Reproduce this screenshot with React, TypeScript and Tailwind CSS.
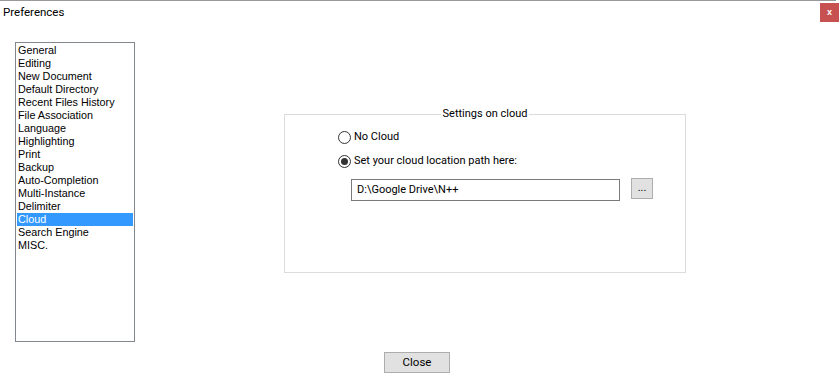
import { useState } from 'react';

const pages = [
  'General',
  'Editing',
  'New Document',
  'Default Directory',
  'Recent Files History',
  'File Association',
  'Language',
  'Highlighting',
  'Print',
  'Backup',
  'Auto-Completion',
  'Multi-Instance',
  'Delimiter',
  'Cloud',
  'Search Engine',
  'MISC.',
];

function Radio({ checked, label, onClick }: { checked: boolean; label: string; onClick: () => void }) {
  return (
    <div className="flex items-center h-[16px] cursor-default" onClick={onClick}>
      <span className="w-[13px] h-[13px] rounded-full border border-[#333] bg-white flex items-center justify-center">
        {checked && <span className="w-[7px] h-[7px] rounded-full bg-[#333]" />}
      </span>
      <span className="ml-[3px]">{label}</span>
    </div>
  );
}

export default function App() {
  const [selected, setSelected] = useState('Cloud');
  const [useCloud, setUseCloud] = useState(true);

  return (
    <div className="w-[840px] h-[384px] bg-white text-black flex flex-col overflow-hidden font-['Roboto','Liberation_Sans',sans-serif] text-[11px]">
      {/* Top edge */}
      <div className="h-[1px] w-[836px] bg-[#999]" />

      {/* Title bar */}
      <div className="h-[21px] flex justify-between items-start">
        <span className="ml-[3px] mt-[4px] leading-[14px] text-[11.5px]">Preferences</span>
        <button className="mt-[2px] mr-[1px] w-[19px] h-[19px] bg-[#c75050] text-white text-[9px] font-bold leading-none flex items-center justify-center font-['Liberation_Sans',sans-serif]">
          x
        </button>
      </div>

      {/* Body */}
      <div className="flex pt-[20px] pl-[15px]">
        {/* Page list */}
        <ul className="w-[120px] h-[300px] border border-[#828790] p-[1px] font-['Liberation_Sans',sans-serif] text-[10.8px]">
          {pages.map(p => (
            <li
              key={p}
              onClick={() => setSelected(p)}
              className={
                p === selected
                  ? 'h-[13px] leading-[13px] pl-[1px] bg-[#3399ff] text-white cursor-default'
                  : 'h-[13px] leading-[13px] pl-[1px] cursor-default'
              }
            >
              {p}
            </li>
          ))}
        </ul>

        {/* Cloud settings group */}
        <div className="ml-[149px] mt-[72px] w-[402px] h-[159px] border border-[#dcdcdc]">
          <div className="flex justify-center -mt-[8px]">
            <span className="bg-white px-[2px] leading-[14px]">Settings on cloud</span>
          </div>
          <div className="pl-[53px] pt-[8px] flex flex-col gap-[8px]">
            <Radio checked={!useCloud} label="No Cloud" onClick={() => setUseCloud(false)} />
            <Radio checked={useCloud} label="Set your cloud location path here:" onClick={() => setUseCloud(true)} />
          </div>
          <div className="flex items-start pl-[66px] mt-[9px]">
            <div className="w-[269px] h-[22px] border border-[#7a7a7a] flex items-center pl-[5px] mt-[1px]">
              {'D:\\Google Drive\\N++'}
            </div>
            <button className="ml-[11px] w-[22px] h-[21px] bg-[#e1e1e1] border border-[#adadad] flex items-center justify-center leading-none pb-[2px]">
              ...
            </button>
          </div>
        </div>
      </div>

      {/* Footer */}
      <div className="pl-[384px] mt-[10px]">
        <button className="w-[66px] h-[21px] bg-[#e1e1e1] border border-[#adadad] flex items-center justify-center text-[11.5px]">
          Close
        </button>
      </div>
    </div>
  );
}
